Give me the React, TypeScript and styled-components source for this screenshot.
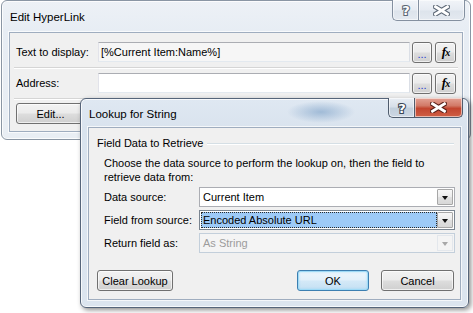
import React from 'react';
import styled, { createGlobalStyle, css } from 'styled-components';

const Global = createGlobalStyle`
  html, body { margin: 0; padding: 0; background: #ffffff; }
  body { font-family: "Liberation Sans", Arial, sans-serif; font-size: 11px; color: #000; }
  #root { width: 473px; height: 313px; }
`;

const Desktop = styled.div`
  position: relative;
  width: 473px;
  height: 313px;
  overflow: hidden;
  background: #ffffff;
`;

const Window = styled.div<{ $active?: boolean; $left: number; $top: number; $width: number }>`
  position: absolute;
  left: ${p => p.$left}px;
  top: ${p => p.$top}px;
  width: ${p => p.$width}px;
  box-sizing: border-box;
  display: flex;
  flex-direction: column;
  padding: 0 7px 7px 7px;
  border-radius: 6px;
  ${p =>
    p.$active
      ? css`
          border: 1px solid #56657a;
          background:
            radial-gradient(ellipse 34px 11px at 240px 13px, rgba(140, 172, 206, 0.75), rgba(140, 172, 206, 0) 100%),
            linear-gradient(#dfe8f2 0px, #d9e3ee 30px, #dce5ef 100%);
          box-shadow: inset 0 0 0 1px rgba(255, 255, 255, 0.75), 2px 2px 5px rgba(0, 0, 0, 0.45);
        `
      : css`
          border: 1px solid #8a96a4;
          background: linear-gradient(#edf1f6 0px, #e7edf4 30px, #e9eef4 100%);
          box-shadow: inset 0 0 0 1px rgba(255, 255, 255, 0.8);
        `}
`;

const TitleBar = styled.div<{ $h: number }>`
  display: flex;
  align-items: center;
  height: ${p => p.$h}px;
  flex: none;
`;

const Title = styled.div`
  flex: 1;
  font-size: 11.5px;
  color: #000;
  padding-left: 1px;
  padding-top: 1px;
  white-space: nowrap;
`;

const CaptionGroup = styled.div<{ $h: number }>`
  align-self: flex-start;
  display: flex;
  height: ${p => p.$h}px;
  margin: -1px -2px 0 0;
`;

const CaptionBtn = styled.div<{ $w: number; $close?: boolean; $active?: boolean }>`
  width: ${p => p.$w}px;
  box-sizing: border-box;
  display: flex;
  align-items: center;
  justify-content: center;
  border: 1px solid ${p => (p.$active ? '#4f5c6d' : '#8490a0')};
  border-top: none;
  box-shadow: inset 0 0 0 1px rgba(255, 255, 255, 0.55);
  background: ${p =>
    p.$close && p.$active
      ? 'linear-gradient(#e3a295 0%, #d27a68 40%, #c2452f 55%, #cf5f45 100%)'
      : p.$active
      ? 'linear-gradient(#e9eef4 0%, #d7dfe9 45%, #c2cfdc 55%, #cdd7e3 100%)'
      : 'linear-gradient(#f1f4f8 0%, #e6ebf2 50%, #dde4ec 55%, #e4e9f0 100%)'};
  &:first-child {
    border-bottom-left-radius: 5px;
    border-right: none;
  }
  &:last-child {
    border-bottom-right-radius: 5px;
  }
`;

const HelpGlyph = ({ dark }: { dark: string }) => (
  <svg width="12" height="14" viewBox="0 0 12 14">
    <text
      x="6"
      y="12"
      textAnchor="middle"
      fontFamily="DejaVu Sans, sans-serif"
      fontWeight="bold"
      fontSize="13"
      fill="#ffffff"
      stroke={dark}
      strokeWidth="2.2"
      paintOrder="stroke"
    >
      ?
    </text>
  </svg>
);

const CloseGlyph = ({ dark }: { dark: string }) => (
  <svg width="17" height="11" viewBox="0 0 17 11">
    <path d="M2.5 1.8 L14.5 9.2 M14.5 1.8 L2.5 9.2" stroke={dark} strokeWidth="5" strokeLinecap="square" fill="none" />
    <path d="M2.5 1.8 L14.5 9.2 M14.5 1.8 L2.5 9.2" stroke="#ffffff" strokeWidth="2.8" strokeLinecap="square" fill="none" />
  </svg>
);

const Client = styled.div<{ $pad: string }>`
  box-sizing: border-box;
  background: #f0f0f0;
  border: 1px solid #9fadbf;
  box-shadow: 0 0 0 1px rgba(255, 255, 255, 0.7);
  padding: ${p => p.$pad};
  display: flex;
  flex-direction: column;
`;

/* Edit HyperLink rows */
const FieldRow = styled.div`
  display: flex;
  align-items: center;
  height: 31px;
  box-sizing: border-box;
  border-bottom: 1px solid #d5d5d5;
  box-shadow: 0 1px 0 #ffffff;
`;

const RowLabel = styled.div`
  width: 84px;
  padding-left: 2px;
  box-sizing: border-box;
  white-space: nowrap;
`;

const TextBox = styled.div<{ $tint?: boolean }>`
  width: 312px;
  height: 20px;
  box-sizing: border-box;
  border: 1px solid #abadb3;
  border-color: #abadb3 #dbdfe6 #e3e9ef #e2e3ea;
  background: ${p => (p.$tint ? '#f6f6f6' : '#ffffff')};
  padding-left: 2px;
  display: flex;
  align-items: center;
  white-space: nowrap;
`;

const buttonFace = css`
  box-sizing: border-box;
  border: 1px solid #707070;
  border-radius: 3px;
  background: linear-gradient(#f2f2f2 0%, #ebebeb 48%, #dddddd 52%, #cfcfcf 100%);
  box-shadow: inset 0 0 0 1px rgba(255, 255, 255, 0.65);
  display: flex;
  align-items: center;
  justify-content: center;
  white-space: nowrap;
`;

const MiniButton = styled.div<{ $w: number; $ml: number }>`
  ${buttonFace}
  width: ${p => p.$w}px;
  height: 21px;
  margin-left: ${p => p.$ml}px;
`;

const Dots = styled.span`
  color: #1a3ad0;
  font-size: 11px;
  margin-top: 4px;
`;

const Fx = styled.span`
  font-family: "Liberation Serif", "Times New Roman", serif;
  font-style: italic;
  font-weight: bold;
  font-size: 13px;
  letter-spacing: -1px;
  & > small {
    font-size: 10px;
  }
`;

const PushButton = styled.div<{ $w: number; $default?: boolean }>`
  ${buttonFace}
  width: ${p => p.$w}px;
  height: 21px;
  ${p =>
    p.$default &&
    css`
      border-color: #3c7fb1;
      background: linear-gradient(#edf6fc 0%, #e2f0fa 48%, #d4e9f7 52%, #c4e0f3 100%);
      box-shadow: inset 0 0 0 1px #9fdaf6, inset 0 0 2px 1px rgba(120, 210, 250, 0.6);
    `}
`;

const EditButton = styled(PushButton)`
  margin: 4px 0 0 2px;
`;

/* Lookup dialog */
const GroupHeader = styled.div`
  display: flex;
  align-items: center;
  height: 14px;
  white-space: nowrap;
`;

const GroupLine = styled.div`
  flex: 1;
  height: 1px;
  margin-left: 4px;
  margin-top: 1px;
  background: #d5dfe5;
  box-shadow: 0 1px 0 #ffffff;
`;

const GroupBody = styled.div`
  padding-left: 7px;
  display: flex;
  flex-direction: column;
`;

const Description = styled.div`
  margin-top: 6px;
  line-height: 14px;
  white-space: nowrap;
`;

const FormGrid = styled.div`
  margin-top: 3px;
  display: grid;
  grid-template-columns: 95px 256px;
  grid-auto-rows: 20px;
  row-gap: 3px;
  align-items: center;
`;

const FormLabel = styled.div`
  white-space: nowrap;
`;

type ComboState = 'normal' | 'focus' | 'disabled';

const Combo = styled.div<{ $state: ComboState }>`
  height: 20px;
  box-sizing: border-box;
  display: flex;
  align-items: center;
  padding: 1px;
  border: 1px solid
    ${p => (p.$state === 'disabled' ? '#c3cfdb' : p.$state === 'focus' ? '#7a8591' : '#abadb3')};
  background: ${p => (p.$state === 'disabled' ? '#f4f4f4' : '#ffffff')};
  color: ${p => (p.$state === 'disabled' ? '#9c9c9c' : '#000')};
`;

const ComboValue = styled.div<{ $state: ComboState }>`
  flex: 1;
  height: 100%;
  box-sizing: border-box;
  display: flex;
  align-items: center;
  padding-left: 2px;
  white-space: nowrap;
  overflow: hidden;
  ${p =>
    p.$state === 'focus' &&
    css`
      background: #9dcaf7;
      border: 1px dotted #2a2a2a;
      padding-left: 1px;
    `}
`;

const ComboArrow = styled.div<{ $state: ComboState }>`
  width: 16px;
  height: 16px;
  box-sizing: border-box;
  display: flex;
  align-items: center;
  justify-content: center;
  ${p =>
    p.$state === 'disabled'
      ? css`
          border: 1px solid #e3e7ec;
          background: #f4f4f4;
        `
      : css`
          border: 1px solid #a7a7a7;
          background: linear-gradient(#f7f7f7 0%, #ececec 50%, #e0e0e0 51%, #d8d8d8 100%);
          border-radius: 1px;
        `}
`;

const Triangle = styled.div<{ $state: ComboState }>`
  width: 0;
  height: 0;
  border-left: 3.5px solid transparent;
  border-right: 3.5px solid transparent;
  border-top: 4px solid ${p => (p.$state === 'disabled' ? '#a8a8a8' : '#111')};
  margin-top: 1px;
`;

const ButtonRow = styled.div`
  margin-top: 17px;
  display: flex;
  align-items: center;
`;

const Spacer = styled.div`
  flex: 1;
`;

const ButtonGap = styled.div`
  width: 12px;
`;

const ComboBox = ({ value, state }: { value: string; state: ComboState }) => (
  <Combo $state={state}>
    <ComboValue $state={state}>{value}</ComboValue>
    <ComboArrow $state={state}>
      <Triangle $state={state} />
    </ComboArrow>
  </Combo>
);

const Captions = ({ active, closeW }: { active?: boolean; closeW: number }) => (
  <CaptionGroup $h={active ? 20 : 21}>
    <CaptionBtn $w={26} $active={active}>
      <HelpGlyph dark={active ? '#3b4654' : '#5d6876'} />
    </CaptionBtn>
    <CaptionBtn $w={closeW} $close $active={active}>
      <CloseGlyph dark={active ? '#5a2018' : '#5d6876'} />
    </CaptionBtn>
  </CaptionGroup>
);

export default function App() {
  return (
    <>
      <Global />
      <Desktop>
        <Window $left={1} $top={0} $width={470}>
          <TitleBar $h={31}>
            <Title>Edit HyperLink</Title>
            <Captions closeW={47} />
          </TitleBar>
          <Client $pad="4px 4px 7px 4px">
            <FieldRow>
              <RowLabel>Text to display:</RowLabel>
              <TextBox $tint>[%Current Item:Name%]</TextBox>
              <MiniButton $w={20} $ml={2}>
                <Dots>...</Dots>
              </MiniButton>
              <MiniButton $w={21} $ml={3}>
                <Fx>
                  f<small>x</small>
                </Fx>
              </MiniButton>
            </FieldRow>
            <FieldRow>
              <RowLabel>Address:</RowLabel>
              <TextBox />
              <MiniButton $w={20} $ml={2}>
                <Dots>...</Dots>
              </MiniButton>
              <MiniButton $w={21} $ml={3}>
                <Fx>
                  f<small>x</small>
                </Fx>
              </MiniButton>
            </FieldRow>
            <EditButton $w={69}>Edit...</EditButton>
          </Client>
        </Window>

        <Window $active $left={80} $top={98} $width={389}>
          <TitleBar $h={28}>
            <Title>Lookup for String</Title>
            <Captions active closeW={49} />
          </TitleBar>
          <Client $pad="8px 6px 8px 8px">
            <GroupHeader>
              Field Data to Retrieve
              <GroupLine />
            </GroupHeader>
            <GroupBody>
              <Description>
                Choose the data source to perform the lookup on, then the field to
                <br />
                retrieve data from:
              </Description>
              <FormGrid>
                <FormLabel>Data source:</FormLabel>
                <ComboBox value="Current Item" state="normal" />
                <FormLabel>Field from source:</FormLabel>
                <ComboBox value="Encoded Absolute URL" state="focus" />
                <FormLabel>Return field as:</FormLabel>
                <ComboBox value="As String" state="disabled" />
              </FormGrid>
            </GroupBody>
            <ButtonRow>
              <PushButton $w={76}>Clear Lookup</PushButton>
              <Spacer />
              <PushButton $w={72} $default>
                OK
              </PushButton>
              <ButtonGap />
              <PushButton $w={73}>Cancel</PushButton>
            </ButtonRow>
          </Client>
        </Window>
      </Desktop>
    </>
  );
}
